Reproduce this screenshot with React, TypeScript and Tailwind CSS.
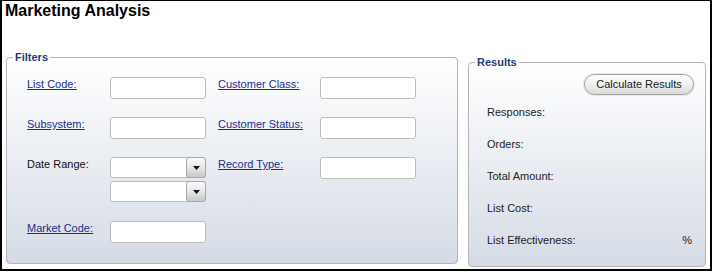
import React from "react";

function TextBox() {
  return (
    <input
      type="text"
      readOnly
      className="block w-[96px] h-[22px] bg-white border border-[#bcbcbc] rounded-[3px] outline-none"
    />
  );
}

function DropDown() {
  return (
    <div className="flex w-[96px] h-[21px] bg-white border border-[#bcbcbc] rounded-[3px]">
      <div className="flex-1" />
      <div className="w-[18px] h-full -my-px -mr-px box-content border border-[#a9a9a9] rounded-[3px] bg-linear-to-b from-[#fbfbfb] via-[#e6e6e6] to-[#c9c9c9] flex items-center justify-center">
        <svg width="7" height="4" viewBox="0 0 7 4">
          <polygon points="0,0 7,0 3.5,4" fill="#111" />
        </svg>
      </div>
    </div>
  );
}

export default function App() {
  const link = "text-[#1b2f8e] underline";
  return (
    <div className="w-[712px] h-[273px] bg-white font-['Liberation_Sans',Arial,sans-serif] text-[11px] leading-[13px] text-[#111]">
      <div className="h-[271px] border-x-2 border-b-2 border-t border-black flex flex-col">
        <h1 className="pl-[3px] text-[16px] leading-[19px] font-bold text-black">
          Marketing Analysis
        </h1>
        <div className="flex items-start gap-[10px] px-[4px] mt-[31px]">
          <fieldset className="w-[452px] h-[213px] border border-[#b5b5b5] rounded-[4px] bg-linear-to-b from-white to-[#d5dbe5]">
            <legend className="ml-[6px] px-[2px] font-bold text-[#1f3c7a] leading-[13px]">
              Filters
            </legend>
            <div className="pl-[20px] pt-[13px] flex flex-col">
              <div className="flex items-start">
                <a className={`w-[83px] pt-[1px] ${link}`}>
                  <span className="underline">List Code:</span>
                </a>
                <TextBox />
                <a className={`ml-[12px] w-[102px] pt-[1px] ${link}`}>
                  <span className="underline">Customer Class:</span>
                </a>
                <TextBox />
              </div>
              <div className="flex items-start mt-[18px]">
                <a className={`w-[83px] pt-[1px] ${link}`}>
                  <span className="underline">Subsystem:</span>
                </a>
                <TextBox />
                <a className={`ml-[12px] w-[102px] pt-[1px] ${link}`}>
                  <span className="underline">Customer Status:</span>
                </a>
                <TextBox />
              </div>
              <div className="flex items-start mt-[18px]">
                <span className="w-[83px] pt-[1px] text-[#111]">Date Range:</span>
                <div className="flex flex-col gap-[3px]">
                  <DropDown />
                  <DropDown />
                </div>
                <a className={`ml-[12px] w-[102px] pt-[1px] ${link}`}>
                  <span className="underline">Record Type:</span>
                </a>
                <TextBox />
              </div>
              <div className="flex items-start mt-[19px]">
                <a className={`w-[83px] pt-[1px] ${link}`}>
                  <span className="underline">Market Code:</span>
                </a>
                <TextBox />
              </div>
            </div>
          </fieldset>

          <fieldset className="w-[238px] h-[211px] mt-[5px] border border-[#b5b5b5] rounded-[4px] bg-linear-to-b from-white to-[#d5dbe5]">
            <legend className="ml-[6px] px-[2px] font-bold text-[#1f3c7a] leading-[13px]">
              Results
            </legend>
            <div className="flex flex-col">
              <button
                type="button"
                className="self-end mr-[11px] mt-[5px] w-[110px] h-[21px] rounded-full border border-[#a3a3a3] bg-linear-to-b from-[#fdfdfd] via-[#f0f0f0] to-[#dadada] text-[11px] leading-[13px] text-[#222] shadow-[0_0_0_1px_#e8e8e8]"
              >
                Calculate Results
              </button>
              <div className="mt-[11px] pl-[18px] pr-[13px] flex flex-col gap-[19px] text-[#222]">
                <div>Responses:</div>
                <div>Orders:</div>
                <div>Total Amount:</div>
                <div>List Cost:</div>
                <div className="flex justify-between">
                  <span>List Effectiveness:</span>
                  <span>%</span>
                </div>
              </div>
            </div>
          </fieldset>
        </div>
      </div>
    </div>
  );
}
